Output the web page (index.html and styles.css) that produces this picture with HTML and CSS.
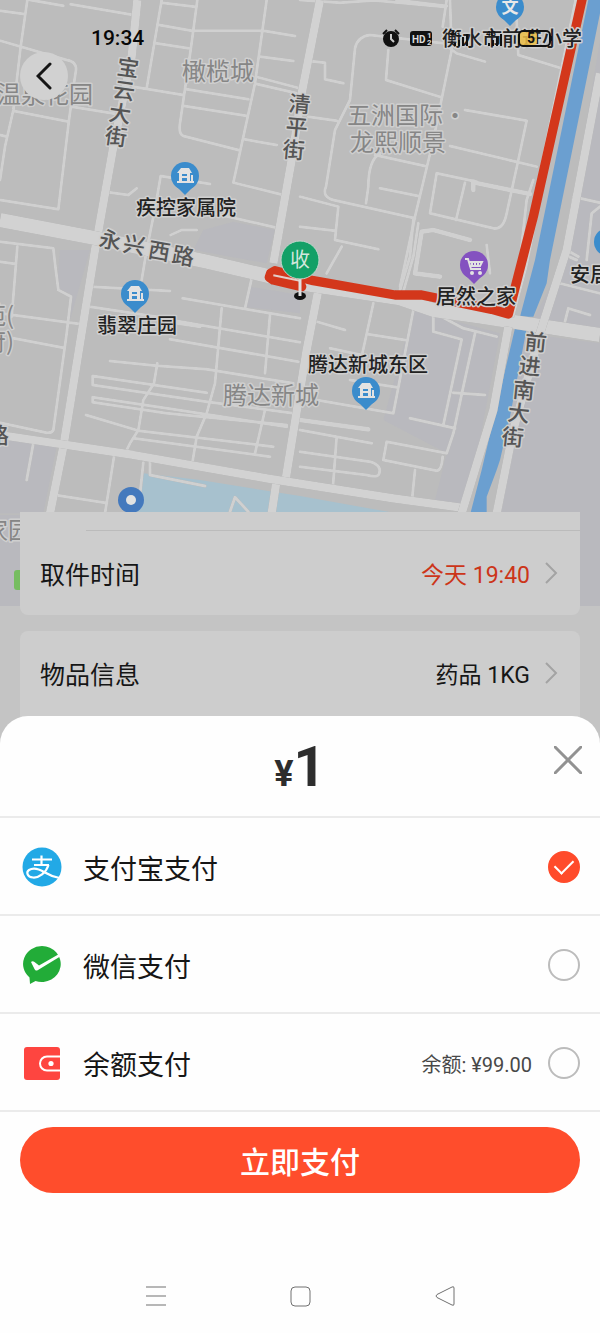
FILE: index.html
```html
<!DOCTYPE html>
<html lang="zh-CN">
<head>
    <meta charset="UTF-8">
    <meta name="viewport" content="width=device-width, initial-scale=1.0">
    <title>支付订单</title>
    <link rel="stylesheet" href="styles.css">
</head>
<body>

    <div class="screen">
        <header class="map-area">
            <svg class="map" viewBox="0 0 600 606" preserveAspectRatio="xMidYMin slice" aria-label="地图">
                <defs>
                    <g id="pin-shape">
                        <circle r="14"/>
                        <path d="M-9 10 L0 19 L9 10z"/>
                    </g>
                    <g id="house">
                        <path d="M-8 -3 L-4 -8 H4 L7 -3 H5 V6 H-6 V-3z M-3 -2 V0 H2 V-2z M-3 2 V5 H2 V2z" fill-rule="evenodd"/>
                        <path d="M-8 5 H9 V7 H-8z M6 -1 H8 V6 H6z"/>
                    </g>
                </defs>

                <!-- land and water -->
                <g transform="scale(.33333)">
                    <path class="land-alt" d="M610 690 L700 665 L825 690 L800 790 L580 750z"/>
                    <path class="land-alt" d="M180 750 L270 750 L210 960 L210 880 L170 870z"/>
                    <path class="land-alt" d="M0 1310 L170 1340 L130 1540 L0 1540z"/>
                    <path class="land-alt" d="M750 860 L900 885 L900 940 L730 920z"/>
                    <path class="land-alt" d="M1240 930 L1500 1000 L1400 1530 L1300 1520 L1340 1360 L1150 1260z"/>
                    <path class="land-alt" d="M1800 120 L1690 780 L1600 960 L1800 990z"/>
                    <path class="land-alt" d="M1570 1000 L1800 1030 V1818 H1490 V1530z"/>
                    <path class="land-alt" d="M0 1545 H60 V1818 H0z"/>
                    <path class="lake" d="M430 1420 L600 1440 L900 1488 L1190 1540 H405z"/>
                    <path class="river" d="M1765 0 H1808 L1650 780 L1640 850 L1600 950 H1560 L1605 780z"/>
                    <path class="river" d="M1545 985 H1580 L1530 1250 L1500 1380 L1490 1410 L1460 1490 V1545 H1410 L1445 1410z"/>
                </g>

                <!-- small streets -->
                <g class="street" transform="scale(.33333)">
                    <path d="M82 0 L62 140 L40 330 L15 440 L0 540 M0 32 L72 42 M90 0 L190 17 M212 13 L405 46 M0 122 L200 180 Q230 185 228 210 L222 250 L207 360 L175 628 L0 600 M42 333 L207 365 M0 405 L22 410 M216 320 L350 342"/>
                    <path d="M485 0 L440 265 M485 8 L585 20 M592 0 L572 150 L540 370 Q535 400 550 408 L715 450 M478 75 L575 92 H790 L885 108 M468 130 L565 145 M400 260 L550 285 M560 268 L745 298 M553 318 L738 347 M800 0 L765 250 L700 548 L850 585 M783 170 L880 183 M775 232 L900 265 M770 252 L900 282 M733 418 L830 435"/>
                    <path d="M325 577 L385 585 L410 565 M630 552 L482 528 L468 610 L440 750 L425 840 M640 640 L830 683 M512 705 L545 690 L590 690 M0 725 L160 745 L165 790 L175 870 L213 890 L200 1000 L160 1290 Q155 1300 140 1298 L0 1268 M52 740 L40 890 L35 950 M0 785 L48 792 M0 940 L240 972 M40 1015 L190 1043 M100 1330 L80 1440 M165 1485 L315 1508 M342 1370 L315 1540 M430 1388 L418 1500"/>
                    <path d="M275 860 L510 873 M270 920 L500 955 M548 895 L900 955 M530 963 L900 1027 M510 1018 L895 1085 M530 970 L600 980 M330 1083 L470 1097 L620 1108 L880 1150 M278 1128 V1155 L620 1205 L880 1240 M278 1128 L620 1178 M278 1192 V1207 L500 1240 L860 1275 M278 1192 L500 1225 L860 1280 M258 1245 L415 1292 L820 1340 M400 1315 L810 1370"/>
                    <path d="M665 925 L645 1150 L620 1240 L590 1310 L575 1400 M810 945 L795 1120 M755 835 L735 925 M472 1090 L462 1150 L430 1200 L415 1290 L390 1330 L375 1360 M795 1230 L765 1360 M450 1385 V1425 L615 1458"/>
                    <path d="M690 1535 L705 1492 L745 1535"/>
                </g>
                <g class="street" transform="translate(300 0) scale(.33333)">
                    <path d="M0 0 L120 8 L240 0 M210 0 L430 20 M440 0 L428 80 M450 0 L455 150 L400 420 L345 650 L315 790 L300 860 M290 0 L440 18 M22 182 L75 188 V238 L130 250 M25 350 L110 362 M150 300 L165 145 Q172 110 210 105 L430 130 L470 160 L555 185 M265 150 L258 240 L425 292 M150 300 L105 390 L78 560 Q65 590 100 600 L345 655"/>
                    <path d="M495 330 L680 362 L655 480 L620 640 Q610 690 580 685 L390 640 L410 520 L530 545 M450 438 L710 500 M225 465 L375 498 M240 460 Q205 480 205 560 L198 610 M240 565 L355 588 M495 548 L468 660 M650 60 L655 165 L785 205"/>
                    <path d="M0 590 L115 620 L105 720 L235 748 M0 680 L105 692 M125 740 L80 820 M340 660 L330 770 L300 870 M355 670 L340 770 L310 875 M560 735 L570 820 M820 590 L810 700 L790 780 M820 590 L900 608 M860 780 L875 640 L900 620 M700 540 L680 600 L660 780"/>
                    <path d="M220 910 L185 1070 M340 930 L280 1240 L50 1200 M205 1003 L315 1020 M50 965 L135 990 M90 1045 L185 1065 M150 1140 L290 1162 M400 920 V995 L485 1018 L430 1275 M415 945 L490 985 L590 1010 M525 1000 L490 1160 L460 1300 L440 1360 L260 1325 L250 1380 L410 1412 Q425 1412 428 1370 M330 1255 L465 1285 M460 1178 L555 1185 M345 1410 L335 1510 M110 1310 L98 1470 M0 1290 L215 1330 M0 1355 L210 1385 Q245 1395 238 1420 Q235 1435 200 1425 L0 1400"/>
                    <path d="M795 965 L805 925 L870 945 M780 850 L900 880 M800 750 L835 770 M795 765 L830 780"/>
                    <path class="lane" d="M0 1260 L205 1288 M520 545 V570 M525 548 L690 582 M345 820 L365 695 L400 690 L510 720 M345 820 L420 830"/>
                </g>

                <!-- main roads -->
                <g transform="scale(.33333)">
                    <path class="road" d="M412 0 L395 170 L340 440 L285 750 L190 1340 L150 1540"/>
                    <path class="road" d="M960 0 L905 280 L875 480 L820 790"/>
                    <path class="road" d="M955 870 L920 1050 L855 1450 M830 1440 L815 1540"/>
                    <path class="road" d="M0 1305 L400 1365 L800 1435 L1180 1495 L1400 1525"/>
                    <path class="road wide" d="M0 660 L290 715 L620 785 L900 850 L1200 895 L1300 930 L1440 950 L1800 1005"/>
                    <path class="road" d="M1525 980 L1480 1230 L1385 1540"/>
                    <path class="road" d="M1800 220 L1700 750 L1620 1000 L1540 1290 L1490 1540"/>
                    <path class="road" d="M1735 0 L1570 800 L1530 950"/>
                </g>

                <!-- route -->
                <g transform="scale(.33333)">
                    <path class="route" d="M1748 -10 L1600 650 L1525 942 L1475 928 L1265 885 L1185 885 L940 842 L825 812 L812 820 L808 832 L820 840 L905 860"/>
                    <path class="route-core" d="M820 826 L900 842"/>
                </g>

                <!-- district names -->
                <g class="district">
                    <text x="182" y="80">橄榄城</text>
                    <text x="-3" y="103">温泉花园</text>
                    <text x="347" y="124">五洲国际·</text>
                    <text x="350" y="151">龙熙顺景</text>
                    <text x="223" y="404">腾达新城</text>
                    <text x="-16" y="539">家园</text>
                    <text x="-18" y="324">苑(</text>
                    <text x="-18" y="350">府)</text>
                </g>

                <!-- street names -->
                <g class="street-name">
                    <text x="116 112 108 104" y="74 97 120 143" rotate="8">宝云大街</text>
                    <text x="288 285 282" y="111 134 157" rotate="5">清平街</text>
                    <text x="98 122 147 171" y="246 251 257 262" rotate="10">永兴西路</text>
                    <text x="524 518 512 507 501" y="349 373 397 420 444" rotate="6">前进南大街</text>
                    <text x="-13" y="443">路</text>
                </g>

                <!-- pins -->
                <g class="pin">
                    <g transform="translate(185 176)"><use href="#pin-shape"/><use class="pin-icon" href="#house"/></g>
                    <g transform="translate(135 294)"><use href="#pin-shape"/><use class="pin-icon" href="#house"/></g>
                    <g transform="translate(366 391)"><use href="#pin-shape"/><use class="pin-icon" href="#house"/></g>
                    <g transform="translate(608 242)"><use href="#pin-shape"/></g>
                    <g transform="translate(510 7)"><use href="#pin-shape"/><text class="pin-text" y="6">文</text></g>
                </g>
                <g class="pin shop" transform="translate(474 265)">
                    <use href="#pin-shape"/>
                    <path class="cart" d="M-9 -6 H-6 L-3 4 H7 M-5 -3 H8 L6 1 H-4z M-2 -3 V1 M1 -3 V1 M4 -3 V1"/>
                    <circle class="pin-icon" cx="-2" cy="8" r="2"/>
                    <circle class="pin-icon" cx="6" cy="8" r="2"/>
                </g>
                <g transform="translate(131 500)">
                    <circle class="dot" r="13"/>
                    <circle class="pin-icon" r="5"/>
                </g>
                <rect class="park" x="14" y="570" width="12" height="20" rx="3"/>

                <!-- place names -->
                <g class="place">
                    <text x="136" y="215">疾控家属院</text>
                    <text x="97" y="333">翡翠庄园</text>
                    <text x="436" y="304">居然之家</text>
                    <text x="308" y="372">腾达新城东区</text>
                    <text x="570" y="282">安居</text>
                    <text x="442" y="46">衡水市前进小学</text>
                </g>

                <!-- receiver marker -->
                <ellipse class="foot" cx="300" cy="296" rx="6" ry="4"/>
                <path class="stem" d="M300 278 V296"/>
                <circle class="receiver" cx="300" cy="260" r="19"/>
                <text class="receiver-text" x="300" y="267">收</text>
            </svg>

            <div class="status-bar">
                <span class="clock">19:34</span>
                <svg class="status-icons" width="172" height="20" viewBox="0 0 172 20">
                    <path d="M3 6 L7 2 M19 6 L15 2" stroke="#111" stroke-width="2"/>
                    <circle cx="11" cy="11" r="8" fill="#111"/>
                    <path d="M11 6 V11 L14 14" fill="none" stroke="#ccc" stroke-width="2"/>
                    <rect x="30" y="3" width="22" height="15" rx="3" fill="#111"/>
                    <text x="32" y="15" class="hd">HD</text>
                    <text x="47" y="10" class="tiny light">1</text>
                    <text x="47" y="17" class="tiny light">2</text>
                    <text x="70" y="8" class="tiny">4G</text>
                    <path d="M75 18 V15 M79 18 V12 M83 18 V9 M87 18 V6" stroke="#111" stroke-width="2"/>
                    <text x="106" y="8" class="tiny">4G</text>
                    <path d="M109 18 V15 M113 18 V12 M117 18 V9 M121 18 V6" stroke="#111" stroke-width="2"/>
                    <rect x="139" y="4" width="18" height="13" rx="3" fill="#eec047" fill-opacity=".85"/>
                    <rect x="139" y="3" width="31" height="15" rx="4" fill="none" stroke="#111" stroke-width="2"/>
                    <path d="M172 8 V13" stroke="#111" stroke-width="2"/>
                    <text x="147" y="15" class="hd level">5</text>
                </svg>
            </div>

            <button class="back-button" type="button" aria-label="返回">
                <svg width="16" height="28" viewBox="0 0 16 28"><path d="M14 2 L2 14 L14 26"/></svg>
            </button>
        </header>

        <main class="order">
            <section class="card first">
                <button class="card-row" type="button">
                    <span class="card-label">取件时间</span>
                    <span class="card-value urgent">今天 19:40</span>
                    <svg class="chevron" width="14" height="24" viewBox="0 0 14 24"><path d="M2 2 L12 12 L2 22"/></svg>
                </button>
            </section>
            <section class="card last">
                <button class="card-row" type="button">
                    <span class="card-label">物品信息</span>
                    <span class="card-value">药品 1KG</span>
                    <svg class="chevron" width="14" height="24" viewBox="0 0 14 24"><path d="M2 2 L12 12 L2 22"/></svg>
                </button>
            </section>
        </main>

        <form class="pay-sheet">
            <div class="sheet-header">
                <p class="price"><span class="currency">¥</span>1</p>
                <button class="close-button" type="button" aria-label="关闭">
                    <svg width="28" height="28" viewBox="0 0 28 28"><path d="M1 1 L27 27 M27 1 L1 27"/></svg>
                </button>
            </div>

            <label class="pay-row">
                <svg class="pay-icon" viewBox="0 0 40 40">
                    <circle cx="20" cy="20" r="19.5" fill="#22a9e6"/>
                    <g fill="none" stroke="#fff" stroke-width="2.2">
                        <path d="M10 12.500 H30 M19.500 8.500 V18 M12 18 H27"/>
                        <path d="M26.500 18 C24 26 17 31 11 30.500 C5 30 4 25 7 23 C11 20.500 17 22 22 25 C27 28 32 30 37.500 31"/>
                    </g>
                </svg>
                <span class="pay-name">支付宝支付</span>
                <input class="pay-radio" type="radio" name="pay" checked>
            </label>
            <label class="pay-row">
                <svg class="pay-icon" viewBox="0 0 40 40">
                    <path d="M20 1 A19 18 0 1 1 13.500 36 L8 39 L7.500 32.500 A19 18 0 0 1 20 1z" fill="#22ac38"/>
                    <path d="M9 17 Q10.500 15.500 12.500 17 L17 20.500 L38 8.500 L39 11 L16 25 Q13.500 26.500 12.500 24z" fill="#fff"/>
                </svg>
                <span class="pay-name">微信支付</span>
                <input class="pay-radio" type="radio" name="pay">
            </label>
            <label class="pay-row">
                <svg class="pay-icon" viewBox="0 0 40 40">
                    <rect x="2" y="4" width="36" height="33" rx="3" fill="#fe4540"/>
                    <path d="M39 13.500 H25 A7 7 0 0 0 25 27.500 H39" fill="none" stroke="#fff" stroke-width="2"/>
                    <circle cx="29" cy="20.500" r="2.600" fill="#fff"/>
                </svg>
                <span class="pay-name">余额支付</span>
                <span class="balance">余额: ¥99.00</span>
                <input class="pay-radio" type="radio" name="pay">
            </label>

            <button class="pay-button" type="button">立即支付</button>
        </form>

        <nav class="system-nav">
            <button type="button" aria-label="菜单">
                <svg width="24" height="24" viewBox="0 0 24 24"><path d="M2 3 H22 M2 12 H22 M2 21 H22"/></svg>
            </button>
            <button type="button" aria-label="主页">
                <svg width="24" height="24" viewBox="0 0 24 24"><rect x="3" y="3" width="19" height="19" rx="4"/></svg>
            </button>
            <button type="button" aria-label="后退">
                <svg width="24" height="24" viewBox="0 0 24 24"><path d="M22 4 V20 Q22 22 20 21 L5 13.500 Q3 12 5 10.500 L20 3 Q22 2 22 4z"/></svg>
            </button>
        </nav>
    </div>

</body>
</html>
```
FILE: styles.css
```css
* {
    box-sizing: border-box;
}

body {
    margin: 0;
    background: #fefefe;
    color: #161616;
    font-family: Roboto, "Noto Sans CJK SC", sans-serif;
}

button {
    border: none;
    padding: 0;
    background: none;
    color: inherit;
    font-family: inherit;
    cursor: pointer;
}

svg {
    display: block;
}

.screen {
    display: flex;
    flex-direction: column;
    min-height: 100vh;
    background: #c4c4c4;
}

/* map */
.map-area {
    position: relative;
    height: 512px;
}

.map {
    position: absolute;
    top: 0;
    left: 0;
    width: 100%;
    height: 606px;
    background: #bcbcbc;
}

.map text {
    paint-order: stroke;
    stroke: #cfcfcf;
    stroke-width: 3px;
    stroke-linejoin: round;
    font-family: "Noto Sans CJK SC", sans-serif;
}

.land-alt {
    fill: #b9b9be;
}

.lake {
    fill: #a7c1ce;
}

.river {
    fill: #6b9fd0;
}

.street {
    fill: none;
    stroke: #d0d0d0;
    stroke-width: 9;
    stroke-linecap: round;
    stroke-linejoin: round;
    filter: drop-shadow(0 0 1px #a8a8a8);
}

.street .lane {
    stroke-width: 14;
}

.road {
    fill: none;
    stroke: #d2d2d2;
    stroke-width: 25;
    stroke-linejoin: round;
    filter: drop-shadow(0 0 2px #a4a4a4);
}

.road.wide {
    stroke-width: 42;
}

.route {
    fill: none;
    stroke: #d3371b;
    stroke-width: 28;
    stroke-linejoin: round;
    stroke-linecap: round;
}

.route-core {
    stroke: #e3cfca;
    stroke-width: 6;
}

.district {
    fill: #868686;
    font-size: 24px;
}

.street-name {
    fill: #555;
    font-size: 22px;
    font-weight: 500;
}

.place {
    fill: #222;
    font-size: 20px;
    font-weight: 500;
}

.pin {
    fill: #3b8ccc;
}

.pin.shop {
    fill: #8452c0;
}

.pin-icon {
    fill: #e2e2e2;
}

.cart {
    fill: none;
    stroke: #e2e2e2;
    stroke-width: 2;
}

.map .pin-text {
    fill: #e8e8e8;
    stroke: none;
    font-size: 17px;
    font-weight: 700;
    text-anchor: middle;
}

.dot {
    fill: #4479bd;
}

.park {
    fill: #76bd60;
}

.receiver {
    fill: #13a067;
    stroke: #c4d6cd;
    stroke-width: 1;
}

.map .receiver-text {
    fill: #d3e7dd;
    stroke: none;
    font-size: 20px;
    text-anchor: middle;
}

.stem {
    stroke: #e0e0e0;
    stroke-width: 3;
}

.foot {
    fill: #111;
}

/* status bar and back button */
.status-bar {
    position: relative;
    display: flex;
    justify-content: space-between;
    align-items: center;
    height: 52px;
    padding: 24px 48px 0 91px;
}

.clock {
    color: #080808;
    font-size: 21px;
    font-weight: 500;
}

.hd {
    fill: #ddd;
    font-size: 10px;
    font-weight: 700;
}

.level {
    fill: #111;
    font-size: 14px;
}

.tiny {
    fill: #111;
    font-size: 8px;
    font-weight: 700;
}

.tiny.light {
    fill: #ddd;
}

.back-button {
    position: relative;
    display: flex;
    align-items: center;
    justify-content: center;
    width: 48px;
    height: 48px;
    margin-left: 20px;
    border-radius: 50%;
    background: #d1d1d1;
}

.back-button path {
    fill: none;
    stroke: #151515;
    stroke-width: 3;
    stroke-linecap: round;
}

/* order cards */
.order {
    position: relative;
    display: flex;
    flex-direction: column;
    gap: 16px;
    padding: 0 20px;
}

.card {
    border-radius: 8px;
    background: #cdcdcd;
}

.card.first {
    padding-top: 18px;
    border-radius: 0 0 8px 8px;
}

.card.last {
    padding-bottom: 28px;
}

.card.first::before {
    content: "";
    display: block;
    height: 1px;
    margin-left: 66px;
    background: #bbb;
}

.card-row {
    display: flex;
    align-items: center;
    width: 100%;
    height: 84px;
    padding: 0 22px 0 20px;
}

.card-label {
    margin-right: auto;
    font-size: 25px;
}

.card-value {
    margin-right: 14px;
    font-size: 23px;
}

.card-value.urgent {
    color: #cc3519;
}

.chevron path {
    fill: none;
    stroke: #a3a3a3;
    stroke-width: 2;
}

/* payment sheet, slides over the last card */
.pay-sheet {
    position: relative;
    margin-top: -27px;
    border-radius: 28px 28px 0 0;
    background: #fefefe;
}

.sheet-header {
    position: relative;
    display: flex;
    justify-content: center;
    height: 102px;
    padding-top: 18px;
    border-bottom: 2px solid #ebebeb;
}

.price {
    margin: 0;
    color: #2d2d2d;
    font-size: 56px;
    font-weight: 700;
    line-height: 66px;
}

.currency {
    font-size: 36px;
}

.close-button {
    position: absolute;
    top: 30px;
    right: 18px;
}

.close-button path {
    stroke: #929292;
    stroke-width: 3;
    stroke-linecap: round;
}

.pay-row {
    display: flex;
    align-items: center;
    height: 98px;
    padding: 2px 20px 0 22px;
    border-bottom: 2px solid #ebebeb;
    cursor: pointer;
}

.pay-icon {
    width: 40px;
    height: 40px;
    margin-right: 21px;
}

.pay-name {
    margin-right: auto;
    font-size: 27px;
}

.balance {
    margin-right: 16px;
    color: #484848;
    font-size: 20px;
}

.pay-radio {
    appearance: none;
    display: flex;
    align-items: center;
    justify-content: center;
    width: 32px;
    height: 32px;
    margin: 0;
    border: 2px solid #bcbcbc;
    border-radius: 50%;
}

.pay-radio:checked {
    border-color: #ff4b2b;
    background: #ff4b2b;
}

.pay-radio:checked::after {
    content: "";
    width: 16px;
    height: 9px;
    margin-bottom: 5px;
    border: solid #fff;
    border-width: 0 0 2px 2px;
    transform: rotate(-45deg);
}

.pay-button {
    display: block;
    width: calc(100% - 40px);
    height: 66px;
    margin: 15px 20px 0;
    border-radius: 33px;
    background: #ff4d2c;
    color: #fff;
    font-size: 30px;
    font-weight: 500;
}

/* system navigation */
.system-nav {
    display: flex;
    flex: 1;
    justify-content: center;
    align-items: flex-end;
    gap: 120px;
    padding: 90px 0 25px;
    background: #fefefe;
}

.system-nav svg {
    fill: none;
    stroke: #707070;
    stroke-width: 1;
}
```
